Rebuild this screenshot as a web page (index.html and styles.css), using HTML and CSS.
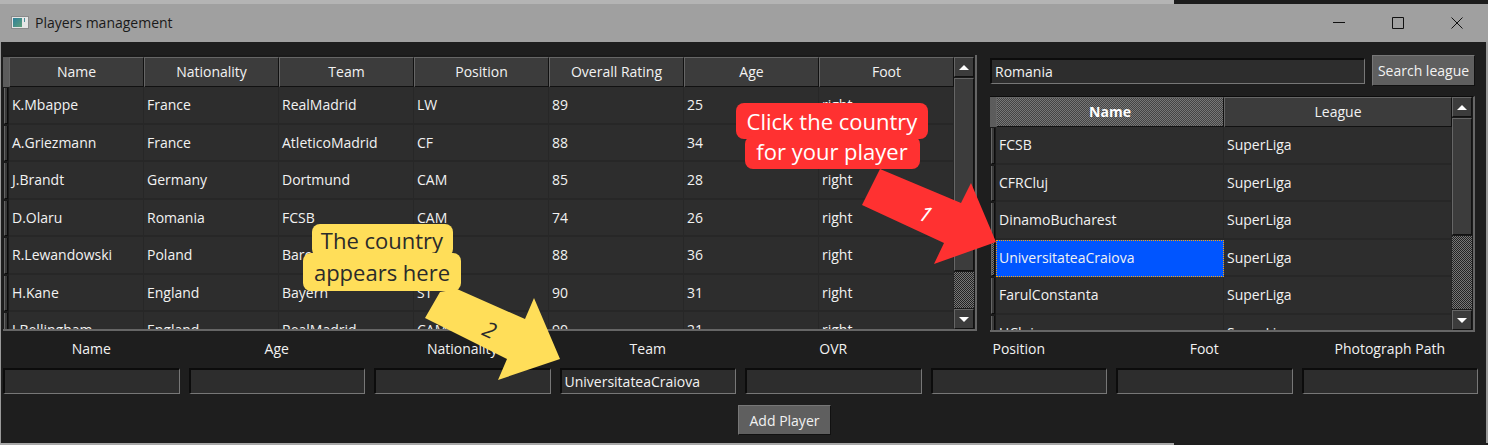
FILE: index.html
```html
<!DOCTYPE html>
<html lang="en">
<head>
    <meta charset="UTF-8">
    <title>Players management</title>
    <link rel="stylesheet" href="styles.css">
</head>
<body>

    <div class="top-strip"><div class="strip-dark"></div></div>

    <div class="titlebar">
        <div class="app-icon"><div class="app-icon-fill"></div><div class="app-icon-tick"></div></div>
        <span class="title-text">Players management</span>
        <div class="win-buttons">
            <svg width="12" height="12" viewBox="0 0 12 12"><path d="M0 5.5H12" stroke="#111" fill="none"/></svg>
            <svg width="12" height="12" viewBox="0 0 12 12"><path d="M.5 .5H11.5V11.5H.5Z" stroke="#111" fill="none"/></svg>
            <svg width="12" height="12" viewBox="0 0 12 12"><path d="M.5 .5L11.5 11.5M11.5 .5L.5 11.5" stroke="#111" fill="none"/></svg>
        </div>
    </div>

    <div class="window">
        <div class="top-section">
            <div class="table-frame players">
                <div class="table">
                    <div class="row head">
                        <div class="corner"></div>
                        <div class="th">Name</div><div class="th">Nationality</div><div class="th">Team</div><div class="th">Position</div><div class="th">Overall Rating</div><div class="th">Age</div><div class="th">Foot</div>
                    </div>
                    <div class="row"><div class="tick"></div><div class="td">K.Mbappe</div><div class="td">France</div><div class="td">RealMadrid</div><div class="td">LW</div><div class="td">89</div><div class="td">25</div><div class="td">right</div></div>
                    <div class="row"><div class="tick"></div><div class="td">A.Griezmann</div><div class="td">France</div><div class="td">AtleticoMadrid</div><div class="td">CF</div><div class="td">88</div><div class="td">34</div><div class="td">right</div></div>
                    <div class="row"><div class="tick"></div><div class="td">J.Brandt</div><div class="td">Germany</div><div class="td">Dortmund</div><div class="td">CAM</div><div class="td">85</div><div class="td">28</div><div class="td">right</div></div>
                    <div class="row"><div class="tick"></div><div class="td">D.Olaru</div><div class="td">Romania</div><div class="td">FCSB</div><div class="td">CAM</div><div class="td">74</div><div class="td">26</div><div class="td">right</div></div>
                    <div class="row"><div class="tick"></div><div class="td">R.Lewandowski</div><div class="td">Poland</div><div class="td">Barcelona</div><div class="td">ST</div><div class="td">88</div><div class="td">36</div><div class="td">right</div></div>
                    <div class="row"><div class="tick"></div><div class="td">H.Kane</div><div class="td">England</div><div class="td">Bayern</div><div class="td">ST</div><div class="td">90</div><div class="td">31</div><div class="td">right</div></div>
                    <div class="row"><div class="tick"></div><div class="td">J.Bellingham</div><div class="td">England</div><div class="td">RealMadrid</div><div class="td">CAM</div><div class="td">90</div><div class="td">21</div><div class="td">right</div></div>
                </div>
                <div class="scrollbar">
                    <div class="sb-btn"><div class="arrow-up"></div></div>
                    <div class="sb-thumb players-thumb"></div>
                    <div class="sb-hatch"></div>
                    <div class="sb-btn"><div class="arrow-down"></div></div>
                </div>
            </div>

            <div class="side">
                <div class="search-row">
                    <input class="field search-field" type="text" value="Romania">
                    <button class="btn search-btn" type="button">Search league</button>
                </div>
                <div class="table-frame clubs">
                    <div class="table">
                        <div class="row head">
                            <div class="corner"></div>
                            <div class="th th-sorted">Name</div><div class="th">League</div>
                        </div>
                        <div class="row"><div class="tick"></div><div class="td">FCSB</div><div class="td">SuperLiga</div></div>
                        <div class="row"><div class="tick"></div><div class="td">CFRCluj</div><div class="td">SuperLiga</div></div>
                        <div class="row"><div class="tick"></div><div class="td">DinamoBucharest</div><div class="td">SuperLiga</div></div>
                        <div class="row"><div class="tick tick-on"></div><div class="td td-selected">UniversitateaCraiova</div><div class="td">SuperLiga</div></div>
                        <div class="row"><div class="tick"></div><div class="td">FarulConstanta</div><div class="td">SuperLiga</div></div>
                        <div class="row"><div class="tick"></div><div class="td">UCluj</div><div class="td">SuperLiga</div></div>
                    </div>
                    <div class="scrollbar">
                        <div class="sb-btn"><div class="arrow-up"></div></div>
                        <div class="sb-thumb clubs-thumb"></div>
                        <div class="sb-hatch"></div>
                        <div class="sb-btn"><div class="arrow-down"></div></div>
                    </div>
                </div>
            </div>
        </div>

        <div class="form-grid">
            <label class="form-label">Name</label>
            <label class="form-label">Age</label>
            <label class="form-label">Nationality</label>
            <label class="form-label">Team</label>
            <label class="form-label">OVR</label>
            <label class="form-label">Position</label>
            <label class="form-label">Foot</label>
            <label class="form-label">Photograph Path</label>
            <input class="field" type="text">
            <input class="field" type="text">
            <input class="field" type="text">
            <input class="field" type="text" value="UniversitateaCraiova">
            <input class="field" type="text">
            <input class="field" type="text">
            <input class="field" type="text">
            <input class="field" type="text">
        </div>

        <div class="add-row">
            <button class="btn add-btn" type="button">Add Player</button>
        </div>
    </div>

    <div class="bottom-strip"></div>

    <!-- annotations drawn on top of the screenshot -->
    <svg class="arrows" width="1488" height="445" viewBox="0 0 1488 445">
        <polygon points="880,169 961,203 971,183 996,242 934,264 944,243 862,205" fill="#ff3131"/>
        <polygon points="440,292 457,289 525,319 534,298 560,359 498,380 507,359 425,318" fill="#ffde59"/>
    </svg>
    <span class="step step-one">1</span>
    <span class="step step-two">2</span>
    <div class="note note-red">
        <span class="note-line">Click the country</span>
        <span class="note-line">for your player</span>
    </div>
    <div class="note note-yellow">
        <span class="note-line">The country</span>
        <span class="note-line">appears here</span>
    </div>

</body>
</html>
```

FILE: styles.css
```css
* {
    box-sizing: border-box;
}

body {
    margin: 0;
    width: 1488px;
    height: 445px;
    overflow: hidden;
    position: relative;
    background-color: #1e1e1e;
    font-family: "Open Sans", Arial, sans-serif;
    font-size: 14px;
    color: #f2f2f2;
}

.top-strip {
    height: 4px;
    background-color: #b4b4b4;
    display: flex;
    justify-content: flex-end;
}

.strip-dark {
    width: 314px;
    background-color: #1c1c1c;
}

.titlebar {
    height: 38px;
    background-color: #a0a0a0;
    display: flex;
    align-items: center;
    padding-left: 11px;
    color: #1a1a1a;
}

.app-icon {
    width: 18px;
    height: 13px;
    background-color: #e6e6e6;
    border: 1px solid #8a8a8a;
    padding: 1px;
    display: flex;
    gap: 2px;
    margin-top: -1px;
}

.app-icon-fill {
    width: 9px;
    background: linear-gradient(135deg, #2f7f9a, #5f9f7a);
}

.app-icon-tick {
    width: 1px;
    height: 4px;
    background-color: #4f8f9a;
}

.title-text {
    margin-left: 6px;
    margin-top: -1px;
}

.win-buttons {
    margin-left: auto;
    margin-right: 25px;
    display: flex;
    gap: 47px;
    margin-top: -1px;
}

.window {
    height: 401px;
    background-color: #1e1e1e;
    border-left: 1px solid #9a9a9a;
    border-right: 2px solid #9a9a9a;
    padding-top: 13px;
}

.top-section {
    display: flex;
    align-items: flex-start;
    gap: 13px;
    padding-left: 2px;
}

.table-frame {
    display: flex;
    background-color: #1a1a1a;
    border-right: 2px solid #666;
    border-bottom: 2px solid #666;
    padding-top: 2px;
    overflow: hidden;
}

.players {
    width: 974px;
    height: 276px;
}

.clubs {
    width: 485px;
    height: 236px;
    margin-top: 10px;
    border-top: 1px solid #0c0c0c;
    padding-top: 0;
}

.table {
    overflow: hidden;
    flex: none;
}

.players .table {
    width: 951px;
}

.clubs .table {
    width: 462px;
}

.row {
    display: grid;
    height: 37.5px;
}

.players .row {
    grid-template-columns: 6px repeat(7, 135px);
}

.clubs .row {
    grid-template-columns: 6px 228px 228px;
}

.row.head {
    height: 30px;
}

.corner {
    background-color: #5c5c5c;
    margin-bottom: 1px;
}

.th {
    background-color: #3c3c3c;
    border-top: 1px solid #666;
    border-left: 1px solid #666;
    border-right: 1px solid #111;
    border-bottom: 2px solid #111;
    text-align: center;
    line-height: 28px;
}

.th-sorted {
    font-weight: bold;
    color: #fff;
    background: repeating-conic-gradient(#777 0 25%, #444 0 50%) 0 0 / 2px 2px;
}

.tick {
    margin: 1px 1px 1px 1px;
    background-color: #3a3a3a;
    border-left: 1px solid #666;
    border-right: 1px solid #0c0c0c;
    border-bottom: 1px solid #0c0c0c;
}

.tick-on {
    background: repeating-conic-gradient(#777 0 25%, #333 0 50%) 0 0 / 2px 2px;
}

.td {
    background-color: #2d2d2d;
    border-right: 1px solid #272727;
    border-bottom: 2px solid #272727;
    padding-left: 3px;
    line-height: 35px;
    white-space: nowrap;
}

.td-selected {
    background-color: #0055ff;
    border: 1px dotted #ffa500;
    padding-left: 2px;
    line-height: 34px;
}

.scrollbar {
    width: 20px;
    flex: none;
    display: flex;
    flex-direction: column;
    gap: 1px;
}

.sb-btn {
    height: 20px;
    flex: none;
    background-color: #3c3c3c;
    border: 1px solid #666;
    border-right-color: #111;
    border-bottom-color: #111;
    display: flex;
    align-items: center;
    justify-content: center;
}

.arrow-up {
    border-left: 5px solid transparent;
    border-right: 5px solid transparent;
    border-bottom: 5px solid #fff;
}

.arrow-down {
    border-left: 5px solid transparent;
    border-right: 5px solid transparent;
    border-top: 5px solid #fff;
}

.sb-thumb {
    flex: none;
    background-color: #3c3c3c;
    border: 1px solid #666;
    border-right-color: #111;
    border-bottom-color: #111;
}

.players-thumb {
    height: 193px;
}

.clubs-thumb {
    height: 117px;
}

.sb-hatch {
    flex: 1;
    background: repeating-conic-gradient(#777 0 25%, #222 0 50%) 0 0 / 2px 2px;
}

.side {
    width: 485px;
}

.search-row {
    display: flex;
    align-items: center;
    gap: 7px;
    height: 31px;
}

.field {
    height: 26px;
    min-width: 0;
    width: 100%;
    background-color: #2d2d2d;
    color: #f2f2f2;
    font-family: inherit;
    font-size: 14px;
    padding: 0 3px;
    outline: none;
    border-style: solid;
    border-width: 2px 1px 1px 2px;
    border-color: #0c0c0c #777 #777 #0c0c0c;
    border-radius: 0;
}

.search-field {
    width: 375px;
    flex: none;
}

.btn {
    background-color: #5f5f5f;
    color: #f2f2f2;
    font-family: inherit;
    font-size: 14px;
    border: 1px solid #777;
    border-right-color: #111;
    border-bottom-color: #111;
    padding: 0;
}

.search-btn {
    width: 104px;
    height: 31px;
}

.form-grid {
    display: grid;
    grid-template-columns: repeat(8, 176.5px);
    column-gap: 9px;
    row-gap: 9px;
    padding-left: 2px;
    margin-top: 7px;
}

.form-label {
    text-align: center;
    line-height: 20px;
}

.add-row {
    display: flex;
    justify-content: center;
    padding-right: 0;
    margin-top: 11px;
}

.add-btn {
    width: 93px;
    height: 30px;
    margin-left: 83px;
    margin-left: 82px;
}

.bottom-strip {
    position: absolute;
    left: 0;
    bottom: 0;
    width: 1174px;
    height: 2px;
    background-color: #a8a8a8;
}

.arrows {
    position: absolute;
    left: 0;
    top: 0;
}

.note {
    position: absolute;
    display: flex;
    flex-direction: column;
    align-items: center;
    font-family: "Open Sans", sans-serif;
    font-size: 22px;
}

.note-line {
    border-radius: 8px;
    padding: 0 8px;
    text-align: center;
}

.note-red {
    left: 736px;
    top: 103px;
    width: 192px;
    color: #fff;
}

.note-red .note-line {
    background-color: #ff3131;
    height: 33px;
    line-height: 36px;
}

.note-red .note-line:first-child {
    width: 192px;
    height: 36px;
}

.note-red .note-line:last-child {
    width: 175px;
    line-height: 30px;
    margin-top: -3px;
}

.note-yellow {
    left: 303px;
    top: 224px;
    width: 158px;
    color: #2b2b2b;
}

.note-yellow .note-line {
    background-color: #ffde59;
    line-height: 32px;
    padding: 0;
}

.note-yellow .note-line:first-child {
    width: 141px;
    height: 33px;
}

.note-yellow .note-line:last-child {
    width: 158px;
    height: 38px;
    margin-top: -4px;
    line-height: 38px;
}

.step {
    position: absolute;
    font-family: "Open Sans", sans-serif;
    font-style: italic;
    font-size: 22px;
}

.step-one {
    left: 920px;
    top: 198px;
    color: #fff;
    transform: rotate(25deg);
}

.step-two {
    left: 484px;
    top: 314px;
    color: #2b2b2b;
    transform: rotate(25deg);
}
```
